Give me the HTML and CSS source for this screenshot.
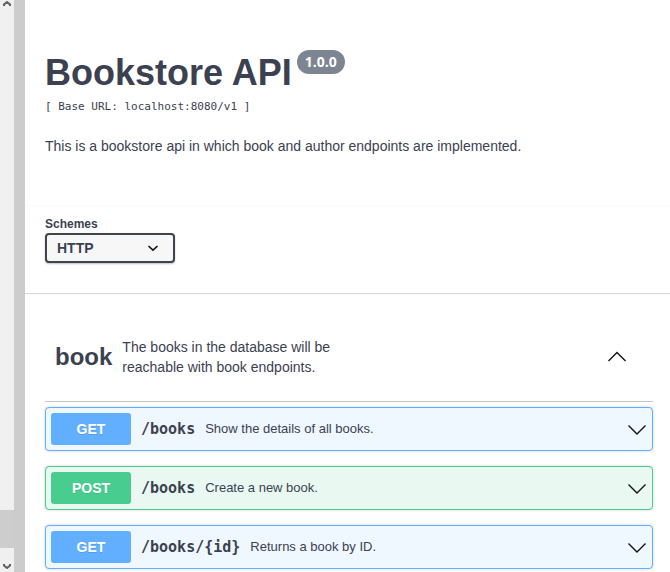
FILE: index.html
```html
<!DOCTYPE html>
<html lang="en">
<head>
<meta charset="utf-8">
<meta name="viewport" content="width=device-width, initial-scale=1">
<title>Bookstore API</title>
<link rel="stylesheet" href="styles.css">
</head>
<body>
<div class="layout">
  <div class="scrollbar" aria-hidden="true">
    <svg class="scroll-arrow" viewBox="0 0 8 6"><path d="M1 5V3.500L4 1l3 2.500V5"/></svg>
    <div class="scroll-thumb"></div>
    <svg class="scroll-arrow" viewBox="0 0 8 6"><path d="M1 1v1.500L4 5l3-2.500V1"/></svg>
  </div>
  <div class="splitter"></div>
  <main class="content">
    <header class="info">
      <h1 class="title">Bookstore API<span class="version">1.0.0</span></h1>
      <p class="base-url">[ Base URL: localhost:8080/v1 ]</p>
      <p class="summary">This is a bookstore api in which book and author endpoints are implemented.</p>
    </header>
    <section class="schemes">
      <label class="schemes-label" for="scheme">Schemes</label>
      <div class="select-box">
        <select id="scheme" class="scheme-select"><option>HTTP</option></select>
        <svg class="select-arrow" viewBox="0 0 12 8" aria-hidden="true"><path d="M1.500 2L6 6.200 10.500 2"/></svg>
      </div>
    </section>
    <section class="tag">
      <div class="tag-header">
        <h2 class="tag-name">book</h2>
        <p class="tag-text">The books in the database will be reachable with book endpoints.</p>
        <button class="toggle" type="button" aria-label="Collapse book">
          <svg class="chevron" viewBox="0 0 20 12" aria-hidden="true"><path d="M1.500 10L10 1.500l8.500 8.500"/></svg>
        </button>
      </div>
      <div class="operations">
        <button class="operation get" type="button">
          <span class="method">GET</span>
          <span class="path">/books</span>
          <span class="description">Show the details of all books.</span>
          <svg class="chevron" viewBox="0 0 20 12" aria-hidden="true"><path d="M1.500 2.500L10 11l8.500-8.500"/></svg>
        </button>
        <button class="operation post" type="button">
          <span class="method">POST</span>
          <span class="path">/books</span>
          <span class="description">Create a new book.</span>
          <svg class="chevron" viewBox="0 0 20 12" aria-hidden="true"><path d="M1.500 2.500L10 11l8.500-8.500"/></svg>
        </button>
        <button class="operation get" type="button">
          <span class="method">GET</span>
          <span class="path">/books/{id}</span>
          <span class="description">Returns a book by ID.</span>
          <svg class="chevron" viewBox="0 0 20 12" aria-hidden="true"><path d="M1.500 2.500L10 11l8.500-8.500"/></svg>
        </button>
      </div>
    </section>
  </main>
</div>
</body>
</html>
```
FILE: styles.css
```css
* { box-sizing: border-box; }

body {
  margin: 0;
  background: #fff;
  color: #3b4151;
  font-family: "Liberation Sans", Arial, sans-serif;
  font-size: 14px;
  line-height: 20px;
}

h1, h2, p { margin: 0; }

svg { fill: none; flex: none; }

.layout { display: flex; min-height: 100vh; }

.scrollbar {
  display: flex;
  flex-direction: column;
  align-items: center;
  flex: none;
  width: 14px;
  background: #f0f0f0;
}

.scroll-arrow {
  width: 8px;
  height: 6px;
  margin: 1px 0 3px;
  stroke: #606060;
  stroke-width: 2;
}

.scroll-thumb {
  width: 100%;
  height: 38px;
  margin: auto 0 14px;
  background: #cdcdcd;
}

.splitter { flex: none; width: 11px; background: #ccc; }

.content { flex: 1; min-width: 0; }

.info { padding: 50px 20px 49px; }

.title { font-size: 36px; line-height: 46px; }

.version {
  display: inline-block;
  margin-left: 5px;
  padding: 2px 8px;
  border-radius: 12px;
  background: #7d8492;
  color: #fff;
  font: bold 14px/20px "Open Sans", sans-serif;
  vertical-align: top;
}

.base-url {
  margin: 1px 0 19px;
  font: 11px/20px "DejaVu Sans Mono", monospace;
}

.schemes {
  padding: 9px 20px 30px;
  border-top: 1px solid #fafafa;
  box-shadow: 0 1px 1px rgba(0, 0, 0, .15);
  clip-path: inset(0 0 -3px 0);
}

.schemes-label {
  display: block;
  font-size: 12px;
  font-weight: bold;
  line-height: 18px;
}

.select-box { position: relative; width: 130px; }

.scheme-select {
  display: block;
  width: 100%;
  height: 30px;
  padding: 0 10px;
  border: 2px solid #41444e;
  border-radius: 4px;
  background: #f7f7f7;
  box-shadow: 0 1px 2px rgba(0, 0, 0, .25);
  color: #3b4151;
  font: bold 14px "Liberation Sans", Arial, sans-serif;
  appearance: none;
}

.select-arrow {
  position: absolute;
  top: 11px;
  right: 16px;
  width: 12px;
  height: 8px;
  stroke: #111;
  stroke-width: 1.6;
  pointer-events: none;
}

.tag { padding: 24px 17px 3px 20px; }

.tag-header {
  display: flex;
  align-items: center;
  min-height: 85px;
  padding: 0 26px 5px 10px;
  border-bottom: 1px solid #c4c6ca;
}

.tag-name { font-size: 24px; line-height: 28px; }

.tag-text { width: 240px; padding: 0 10px; }

.toggle {
  display: flex;
  margin-left: auto;
  padding: 0;
  border: 0;
  background: none;
}

.chevron {
  width: 20px;
  height: 12px;
  stroke: #111;
  stroke-width: 1.4;
}

.operations {
  display: flex;
  flex-direction: column;
  gap: 15px;
  padding-top: 5px;
}

.operation {
  display: flex;
  align-items: center;
  gap: 10px;
  height: 44px;
  padding: 0 5px;
  border: 1px solid;
  border-radius: 4px;
  box-shadow: 0 0 3px rgba(0, 0, 0, .19);
  color: #3b4151;
  font: 13px/20px "Liberation Sans", Arial, sans-serif;
  text-align: left;
}

.get { border-color: #61affe; background: #eff7ff; }
.post { border-color: #49cc90; background: #e9f9f2; }

.method {
  width: 80px;
  padding: 6px 0;
  border-radius: 3px;
  color: #fff;
  font-size: 14px;
  font-weight: bold;
  text-align: center;
  text-shadow: 0 1px 0 rgba(0, 0, 0, .1);
}

.get .method { background: #61affe; }
.post .method { background: #49cc90; }

.path { font: bold 15px/20px "DejaVu Sans Mono", monospace; }

.description { flex: 1; }
```
